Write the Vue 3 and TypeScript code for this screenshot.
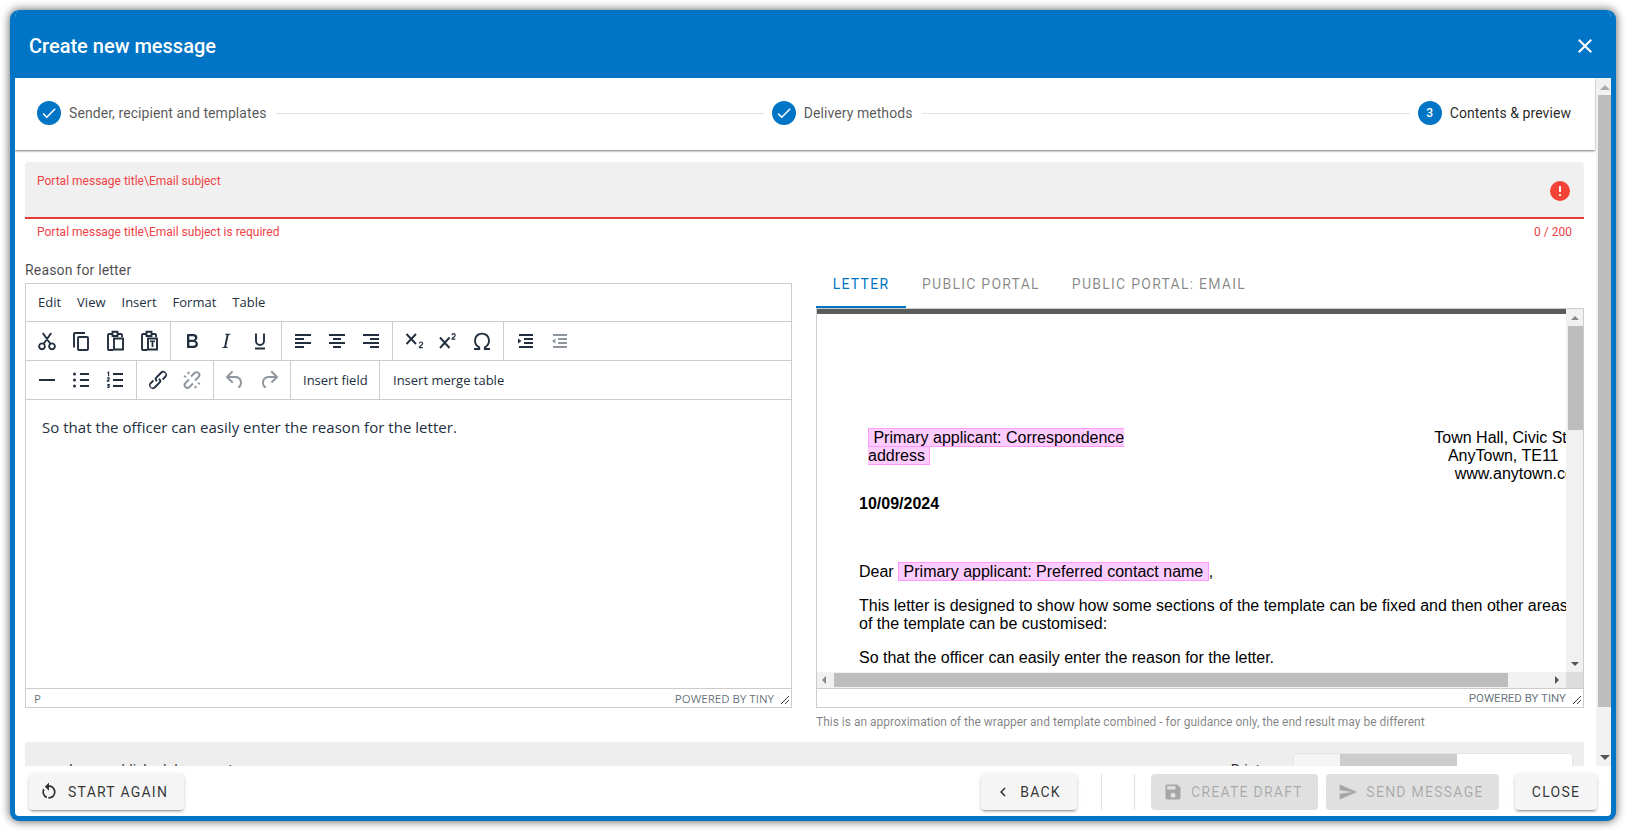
<script setup lang="ts">
interface Tool { name: string; d?: string; s?: string; t?: string; off?: boolean }

const P = {
  check: 'M21,7L9,19L3.5,13.5L4.91,12.09L9,16.17L19.59,5.59L21,7Z',
  close: 'M19,6.41L17.59,5L12,10.59L6.41,5L5,6.41L10.59,12L5,17.59L6.41,19L12,13.41L17.59,19L19,17.59L13.41,12L19,6.41Z',
  alert: 'M13,13H11V7H13M13,17H11V15H13M12,2A10,10 0 0,0 2,12A10,10 0 0,0 12,22A10,10 0 0,0 22,12A10,10 0 0,0 12,2Z',
  restart: 'M12,4C14.1,4 16.1,4.8 17.6,6.3C20.7,9.4 20.7,14.5 17.6,17.6C15.8,19.5 13.3,20.2 10.9,19.9L11.4,17.9C13.1,18.1 14.9,17.5 16.2,16.2C18.5,13.9 18.5,10.1 16.2,7.7C15.1,6.6 13.5,6 12,6V10.6L7,5.6L12,0.6V4M6.3,17.6C3.7,15 3.3,11 5.1,7.9L6.6,9.4C5.5,11.6 5.9,14.4 7.8,16.2C8.3,16.7 8.9,17.1 9.6,17.4L9,19.4C8,19 7.1,18.4 6.3,17.6Z',
  back: 'M15.41,16.58L10.83,12L15.41,7.41L14,6L8,12L14,18L15.41,16.58Z',
  save: 'M15,9H5V5H15M12,19A3,3 0 0,1 9,16A3,3 0 0,1 12,13A3,3 0 0,1 15,16A3,3 0 0,1 12,19M17,3H5C3.89,3 3,3.9 3,5V19A2,2 0 0,0 5,21H19A2,2 0 0,0 21,19V7L17,3Z',
  send: 'M2,21L23,12L2,3V10L17,12L2,14V21Z',
}

const clip = 'M9 5H6a1 1 0 0 0-1 1v14a1 1 0 0 0 1 1h4M15 5h3a1 1 0 0 1 1 1v2M9.5 2.8h5V7h-5z'
const pasteBox = 'M11 9.5h9v11h-9z'

const row1: Tool[][] = [
  [
    { name: 'cut', s: 'M8.7 14.8 16.2 4M15.3 14.8 7.8 4M7 14.4a2.9 2.9 0 1 0 .01 0zM17 14.4a2.9 2.9 0 1 0 .01 0z' },
    { name: 'copy', s: 'M16 4H6a1 1 0 0 0-1 1v13.5M10 8h8a1 1 0 0 1 1 1v11a1 1 0 0 1-1 1h-8a1 1 0 0 1-1-1V9a1 1 0 0 1 1-1z' },
    { name: 'paste', s: clip + pasteBox },
    { name: 'paste-text', s: clip + pasteBox, d: 'M13 11.5h5v1.6h-1.6v5h-1.8v-5H13z' },
  ],
  [
    { name: 'bold', d: 'M7.8 19c-.3 0-.5 0-.6-.2l-.2-.5V5.7c0-.2 0-.4.2-.5l.6-.2h5c1.5 0 2.7.3 3.5 1 .7.6 1.1 1.4 1.1 2.5a3 3 0 0 1-.6 1.9c-.4.6-1 1-1.6 1.2.4.1.9.3 1.3.6s.8.7 1 1.2c.3.4.4 1 .4 1.6 0 1.3-.4 2.3-1.3 3-.8.7-2 1-3.7 1H7.8zm5-8.3c.6 0 1.2-.1 1.6-.5.4-.3.6-.7.6-1.3 0-1.1-.8-1.7-2.3-1.7H9.3v3.5h3.4zm.5 6c.7 0 1.3-.1 1.7-.4.4-.4.6-.9.6-1.5s-.2-1-.7-1.4c-.4-.3-1-.4-2-.4H9.4v3.8h4z' },
    { name: 'italic', d: 'M16.7 4.7l-.1.9h-.3c-.6 0-1 0-1.4.3-.3.3-.4.6-.5 1.1l-2.1 9.8v.6c0 .5.4.8 1.4.8h.2l-.2.8H8l.2-.8h.2c1.1 0 1.8-.5 2-1.5l2-9.8.1-.5c0-.6-.4-.8-1.4-.8h-.3l.2-.9h5.8z' },
    { name: 'underline', s: 'M8 4.5v7.5a4 4 0 0 0 8 0V4.5M7 19.5h10' },
  ],
  [
    { name: 'left', d: 'M4 5h16v2H4zM4 9h9v2H4zM4 13h16v2H4zM4 17h9v2H4z' },
    { name: 'center', d: 'M4 5h16v2H4zM8 9h8v2H8zM4 13h16v2H4zM8 17h8v2H8z' },
    { name: 'right', d: 'M4 5h16v2H4zM11 9h9v2h-9zM4 13h16v2H4zM11 17h9v2h-9z' },
  ],
  [
    { name: 'sub', s: 'M4.500 5l9.500 10M14 5 4.500 15', t: 'M17.400 14.600a1.600 1.600 0 0 1 3.200 0c0 1.600-3.200 2.400-3.200 4h3.400' },
    { name: 'sup', s: 'M4 8.500l9.500 10.500M13.500 8.500 4 19', t: 'M16 6.200a1.600 1.600 0 0 1 3.200 0c0 1.600-3.200 2.400-3.200 4h3.400' },
    { name: 'omega', s: 'M4 20h5.200v-1.600C6.600 17 5 14.400 5 11.500 5 7.500 8 4.600 12 4.600s7 2.900 7 6.900c0 2.900-1.600 5.500-4.200 6.900V20H20' },
  ],
  [
    { name: 'indent', d: 'M6 5h14v2H6zM11 9h9v2h-9zM11 13h9v2h-9zM6 17h14v2H6zM5 9.500 8.500 12 5 14.500z' },
    { name: 'outdent', off: true, d: 'M6 5h14v2H6zM11 9h9v2h-9zM11 13h9v2h-9zM6 17h14v2H6zM8.500 9.500 5 12l3.500 2.500z' },
  ],
]

const row2: Tool[][] = [
  [
    { name: 'hr', d: 'M4 11h16v2H4z' },
    { name: 'bullets', d: 'M11 5h9v2h-9zM11 11h9v2h-9zM11 17h9v2h-9zM5.500 4.500a1.500 1.500 0 1 1 0 3 1.500 1.500 0 0 1 0-3zM5.500 10.500a1.500 1.500 0 1 1 0 3 1.500 1.500 0 0 1 0-3zM5.500 16.500a1.500 1.500 0 1 1 0 3 1.500 1.500 0 0 1 0-3z' },
    { name: 'numbers', d: 'M10 5h10v2H10zM10 11h10v2H10zM10 17h10v2H10z', t: 'M4.400 4.800l1.200-.6v4M4.300 10.600a1 1 0 0 1 2 0c0 1-2 1.300-2 2.500h2.100M4.300 16.500h1.800l-1 1.200c1 0 1.200 .5 1.200 .9 0 .9-1.400 1-2 .5' },
  ],
  [
    { name: 'link', d: 'M6.200 12.300a1 1 0 0 1 1.400 1.400l-2.100 2.100a2 2 0 1 0 2.700 2.700l4.800-4.800a1 1 0 0 0 0-1.400 1 1 0 1 1 1.400-1.300 2.900 2.900 0 0 1 0 4L9.600 20a3.900 3.900 0 0 1-5.500-5.500l2-2zm11.600-.6a1 1 0 0 1-1.400-1.400l2-2a2 2 0 1 0-2.600-2.800L11 10.300a1 1 0 0 0 0 1.400A1 1 0 1 1 9.600 13a2.900 2.900 0 0 1 0-4L14.400 4a3.900 3.900 0 0 1 5.500 5.500l-2 2z' },
    { name: 'unlink', off: true, s: 'M9 11.500 5.500 15a2.800 2.800 0 0 0 4 4l3.500-3.500M15 12.500 18.500 9a2.800 2.800 0 0 0-4-4L11 8.500M4 8l2.200 1M8 3.800 9 6M20 16l-2.200-1M16 20.200 15 18' },
  ],
  [
    { name: 'undo', off: true, d: 'M6.400 8H12c3.700 0 6.200 2 6.800 5.100.6 2.700-.4 5.600-2.300 6.800a1 1 0 0 1-1-1.800c1.100-.6 1.800-2.700 1.400-4.600-.5-2.100-2.100-3.500-4.900-3.500H6.400l3.300 3.300a1 1 0 1 1-1.400 1.400l-5-5a1 1 0 0 1 0-1.400l5-5a1 1 0 0 1 1.400 1.400L6.400 8z' },
    { name: 'redo', off: true, d: 'M17.600 10H12c-2.800 0-4.400 1.400-4.900 3.500-.4 2 .3 4 1.400 4.600a1 1 0 1 1-1 1.800c-2-1.200-2.900-4.100-2.300-6.800.6-3 3-5.100 6.800-5.100h5.600l-3.300-3.300a1 1 0 1 1 1.400-1.400l5 5a1 1 0 0 1 0 1.400l-5 5a1 1 0 0 1-1.400-1.400l3.300-3.300z' },
  ],
]

const menus = ['Edit', 'View', 'Insert', 'Format', 'Table']
const tabs = ['Letter', 'Public portal', 'Public portal: Email']
</script>

<template>
  <div class="dialog">
    <header class="head">
      <span class="title">Create new message</span>
      <svg class="head-close" viewBox="0 0 24 24"><path :d="P.close" /></svg>
    </header>

    <div class="body">
      <div class="scroller">
        <nav class="stepper">
          <div class="step first">
            <span class="dot"><svg viewBox="0 0 24 24"><path :d="P.check" /></svg></span>
            <span class="step-label">Sender, recipient and templates</span>
          </div>
          <i class="rule rule-a"></i>
          <div class="step">
            <span class="dot"><svg viewBox="0 0 24 24"><path :d="P.check" /></svg></span>
            <span class="step-label">Delivery methods</span>
          </div>
          <i class="rule"></i>
          <div class="step">
            <span class="dot">3</span>
            <span class="step-label current">Contents &amp; preview</span>
          </div>
        </nav>

        <main class="main">
          <div class="field">
            <span class="field-label">Portal message title\Email subject</span>
            <svg class="field-icon" viewBox="0 0 24 24"><path :d="P.alert" /></svg>
          </div>
          <div class="details">
            <span>Portal message title\Email subject is required</span>
            <span>0 / 200</span>
          </div>

          <div class="cols">
            <section class="col">
              <div class="reason">Reason for letter</div>
              <div class="editor">
                <div class="menubar">
                  <span v-for="m in menus" :key="m" class="menu">{{ m }}</span>
                </div>
                <div class="toolbar">
                  <div v-for="(group, g) in row1" :key="g" class="group">
                    <span v-for="tool in group" :key="tool.name" class="tool" :class="{ off: tool.off }">
                      <svg viewBox="0 0 24 24">
                        <path v-if="tool.s" class="stroke" :d="tool.s" />
                        <path v-if="tool.d" :d="tool.d" />
                        <path v-if="tool.t" class="thin" :d="tool.t" />
                      </svg>
                    </span>
                  </div>
                </div>
                <div class="toolbar">
                  <div v-for="(group, g) in row2" :key="g" class="group">
                    <span v-for="tool in group" :key="tool.name" class="tool" :class="{ off: tool.off }">
                      <svg viewBox="0 0 24 24">
                        <path v-if="tool.s" class="stroke" :d="tool.s" />
                        <path v-if="tool.d" :d="tool.d" />
                        <path v-if="tool.t" class="thin" :d="tool.t" />
                      </svg>
                    </span>
                  </div>
                  <div class="group text-group">Insert field</div>
                  <div class="group text-group last">Insert merge table</div>
                </div>
                <div class="edit-area">So that the officer can easily enter the reason for the letter.</div>
                <div class="status">
                  <span class="path">P</span>
                  <span class="brand">POWERED BY TINY</span>
                  <svg class="grip" viewBox="0 0 10 10"><path d="M1 9 9 1M5 9l4-4" /></svg>
                </div>
              </div>
            </section>

            <section class="col">
              <div class="tabs">
                <span v-for="(t, i) in tabs" :key="t" class="tab" :class="{ active: i === 0 }">{{ t }}</span>
              </div>
              <div class="preview">
                <div class="pv-top">
                  <div class="pv-main">
                    <div class="darkbar"></div>
                    <div class="letter">
                      <div class="address">
                        <div class="addr-left"><span class="merge">&nbsp;Primary applicant: Correspondence address&nbsp;</span></div>
                        <div class="addr-right">Town Hall, Civic Street,&nbsp;&nbsp;<br />AnyTown, TE11&nbsp;&nbsp;&nbsp;&nbsp;&nbsp;&nbsp;&nbsp;&nbsp;<br />www.anytown.com</div>
                      </div>
                      <div class="date">10/09/2024</div>
                      <div class="dear">Dear <span class="merge">&nbsp;Primary applicant: Preferred contact name&nbsp;</span>,</div>
                      <div class="para">This letter is designed to show how some sections of the template can be fixed and then other areas<br />of the template can be customised:</div>
                      <div class="para">So that the officer can easily enter the reason for the letter.</div>
                    </div>
                    <div class="hbar">
                      <i class="arrow a-left"></i>
                      <span class="hthumb"></span>
                      <i class="arrow a-right"></i>
                    </div>
                  </div>
                  <div class="vbar">
                    <i class="arrow a-up"></i>
                    <span class="vthumb"></span>
                    <i class="arrow a-down"></i>
                    <span class="corner"></span>
                  </div>
                </div>
                <div class="status pv-status">
                  <span class="brand">POWERED BY TINY</span>
                  <svg class="grip" viewBox="0 0 10 10"><path d="M1 9 9 1M5 9l4-4" /></svg>
                </div>
              </div>
              <div class="note">This is an approximation of the wrapper and template combined - for guidance only, the end result may be different</div>
            </section>
          </div>

          <div class="panel">
            <span class="panel-text">Issue published document</span>
            <span class="panel-side">Print</span>
            <div class="toggle"><i class="seg s1"></i><i class="seg s2"></i><i class="seg s3"></i></div>
          </div>
        </main>
      </div>

      <div class="page-bar">
        <i class="arrow a-up big"></i>
        <span class="page-thumb"></span>
        <i class="arrow a-down big"></i>
      </div>
    </div>

    <footer class="foot">
      <button class="btn start"><svg viewBox="0 0 24 24"><path :d="P.restart" /></svg>START AGAIN</button>
      <button class="btn backbtn"><svg viewBox="0 0 24 24"><path :d="P.back" /></svg>BACK</button>
      <i class="vdiv d1"></i>
      <i class="vdiv d2"></i>
      <button class="btn dis draft"><svg viewBox="0 0 24 24"><path :d="P.save" /></svg>CREATE DRAFT</button>
      <button class="btn dis sendbtn"><svg viewBox="0 0 24 24"><path :d="P.send" /></svg>SEND MESSAGE</button>
      <button class="btn closebtn">CLOSE</button>
    </footer>
  </div>
</template>

<style>
html, body { margin: 0; background: #fff; overflow: hidden; }
</style>

<style scoped>
* { box-sizing: border-box; }
.dialog {
  margin: 10px;
  height: 811px;
  display: flex;
  flex-direction: column;
  border: solid #0175c5;
  border-width: 0 5px 5px;
  border-radius: 9px;
  background: #fff;
  box-shadow: 0 0 9px 1px rgba(0, 0, 0, 0.55);
  font-family: Roboto, sans-serif;
  overflow: hidden;
}
.head {
  flex: none;
  height: 68px;
  margin: 0 -5px;
  padding: 4px 19px 0 19px;
  background: #0175c5;
  display: flex;
  align-items: center;
  justify-content: space-between;
  color: #fff;
}
.title { font-size: 20px; font-weight: 500; }
.head-close { width: 24px; height: 24px; fill: #fff; }

.body { flex: none; height: 688px; display: flex; }
.scroller { flex: 1; min-width: 0; overflow: hidden; }

.stepper {
  height: 72px;
  width: 1580px;
  display: flex;
  align-items: center;
  box-shadow: 0 1px 2px rgba(0, 0, 0, 0.55);
  position: relative;
  padding: 0 24px 2px 22px;
}
.step { display: flex; align-items: center; flex: none; }
.dot {
  width: 24px;
  height: 24px;
  border-radius: 50%;
  background: #0175c5;
  color: #fff;
  font-size: 12px;
  font-weight: 500;
  display: flex;
  align-items: center;
  justify-content: center;
  margin-right: 8px;
}
.dot svg { width: 18px; height: 18px; fill: #fff; }
.step-label { font-size: 14px; letter-spacing: 0.07px; color: rgba(0, 0, 0, 0.68); white-space: nowrap; }
.step-label.current { color: rgba(0, 0, 0, 0.87); }
.rule { flex: 1; height: 1px; background: #e0e0e0; margin: 0 8px 0 10px; }

.main { padding: 12px 12px 0 10px; }
.field {
  height: 57px;
  background: #f0f0f0;
  border-bottom: 2px solid #e53935;
  border-radius: 4px 4px 0 0;
  padding: 0 12px;
  display: flex;
  justify-content: space-between;
}
.field-label { font-size: 12px; line-height: 14px; margin-top: 12px; color: #ef4245; }
.field-icon { width: 24px; height: 24px; margin-top: 17px; fill: #f44336; }
.details {
  height: 41px;
  padding: 6px 12px 0;
  display: flex;
  justify-content: space-between;
  font-size: 12px;
  line-height: 14px;
  color: #ef4245;
}

.cols { display: grid; grid-template-columns: 767px 768px; column-gap: 24px; }
.reason { height: 23px; font-size: 14px; letter-spacing: 0.18px; line-height: 20px; color: rgba(0, 0, 0, 0.72); }

.editor {
  height: 425px;
  border: 1px solid #ccc;
  display: flex;
  flex-direction: column;
  font-family: "Open Sans", sans-serif;
  color: #222f3e;
}
.menubar {
  flex: none;
  height: 37px;
  display: flex;
  align-items: center;
  padding: 0 0 2px 12px;
  font-size: 13px;
}
.menu { margin-right: 16px; }
.toolbar { flex: none; height: 39px; display: flex; border-top: 1px solid #ccc; }
.group { display: flex; align-items: center; padding: 0 4px; border-right: 1px solid #ccc; }
.group:last-child { border-right: 0; }
.tool { width: 34px; height: 34px; display: flex; align-items: center; justify-content: center; }
.tool svg { width: 24px; height: 24px; fill: #222f3e; }
.stroke { fill: none; stroke: #222f3e; stroke-width: 1.9; }
.thin { fill: none; stroke: #222f3e; stroke-width: 1.2; }
.tool.off svg { opacity: 0.5; }
.text-group { padding: 0 12px 1px; font-size: 13px; width: 89px; white-space: nowrap; }
.text-group.last { width: auto; padding-left: 13px; }
.edit-area {
  flex: 1;
  border-top: 1px solid #ccc;
  padding: 16px;
  font-size: 15px;
  letter-spacing: 0.03px;
  line-height: 22px;
  color: #222f3e;
}
.status {
  flex: none;
  height: 19px;
  border-top: 1px solid #ccc;
  display: flex;
  align-items: center;
  padding: 0 1px 0 8px;
  font-size: 11.5px;
  color: rgba(34, 47, 62, 0.7);
}
.path { margin-right: auto; }
.brand { margin-left: auto; font-size: 11.5px; }
.grip { width: 10px; height: 10px; margin: 4px 0 0 6px; stroke: #444; stroke-width: 1; fill: none; }

.tabs { height: 48px; display: flex; }
.tab {
  min-width: 90px;
  padding: 0 16px;
  display: flex;
  align-items: center;
  justify-content: center;
  font-size: 14px;
  letter-spacing: 0.0892857em;
  text-transform: uppercase;
  color: rgba(0, 0, 0, 0.48);
  white-space: nowrap;
}
.tab.active { color: #0175c5; box-shadow: inset 0 -2px 0 #0175c5; }

.preview {
  height: 400px;
  border: 1px solid #ccc;
  display: flex;
  flex-direction: column;
}
.pv-top { flex: 1; min-height: 0; display: flex; }
.pv-main { flex: 1; min-width: 0; display: flex; flex-direction: column; }
.darkbar { flex: none; height: 5px; background: #595c5f; }
.letter {
  flex: 1;
  min-height: 0;
  overflow: hidden;
  padding: 115px 0 0 42px;
  font-family: "Liberation Sans", sans-serif;
  font-size: 16px;
  line-height: 18px;
  color: #000;
}
.address { display: flex; width: 1000px; }
.addr-left { flex: none; width: 262px; margin-left: 9px; }
.addr-right { flex: none; width: 241px; margin-left: 270.5px; text-align: center; white-space: nowrap; }
.merge { background: #ffccff; border: 1px solid #ff99ff; }
.date { margin-top: 12px; font-weight: 700; }
.dear { margin-top: 50px; white-space: nowrap; }
.para { margin-top: 16px; white-space: nowrap; }

.hbar { flex: none; height: 16px; background: #f1f1f1; display: flex; align-items: center; }
.hthumb { width: 674px; height: 14px; background: #bdbdbd; }
.vbar { flex: none; width: 17px; background: #f1f1f1; display: flex; flex-direction: column; align-items: center; }
.vthumb { width: 15px; height: 104px; background: #bdbdbd; margin-left: 2px; }
.corner { width: 17px; height: 16px; background: #dcdcdc; margin-top: 3px; flex: none; }

.arrow { flex: none; display: block; width: 0; height: 0; border: 4px solid transparent; }
.a-left { border-left-width: 0; border-right: 4px solid #888; margin: 0 8px 0 5px; }
.a-right { border-right-width: 0; border-left: 4px solid #555; margin-left: auto; margin-right: 7px; }
.a-up { border-top-width: 0; border-bottom: 4px solid #888; margin: 7px 0 6px; }
.a-down { border-bottom-width: 0; border-top: 4px solid #555; margin-top: auto; margin-bottom: 3px; }

.pv-status { padding-right: 1px; }
.note { font-size: 12px; line-height: 16px; margin-top: 6px; color: rgba(0, 0, 0, 0.5); }

.panel {
  margin-top: 12px;
  height: 60px;
  background: #eee;
  display: flex;
  padding: 12px 12px 0 44px;
  font-size: 14px;
  line-height: 20px;
  color: rgba(0, 0, 0, 0.8);
}
.panel-text { margin-top: 6px; }
.panel-side { margin: 6px 34px 0 auto; }
.toggle { width: 278px; height: 40px; display: flex; border-radius: 4px; overflow: hidden; background: #fff; box-shadow: 0 0 0 1px #e4e4e4; }
.s1 { width: 46px; background: #f5f5f5; }
.s2 { width: 117px; background: #ccc; }
.s3 { flex: 1; background: #fff; }

.page-bar { flex: none; width: 15px; background: #f1f1f1; display: flex; flex-direction: column; align-items: center; }
.page-thumb { width: 13px; height: 612px; margin-left: 2px; background: #bdbdbd; }
.a-up.big { border-width: 0 5px 5px; border-color: transparent transparent #aaa; margin: 7px 0 5px 2px; }
.a-down.big { border-width: 5px 5px 0; border-color: #555 transparent transparent; margin: auto 0 6px 2px; }

.foot { flex: 1; display: flex; padding: 8px 14px 6px; }
.btn {
  height: 36px;
  border: 0;
  border-radius: 4px;
  background: #f5f5f5;
  color: rgba(0, 0, 0, 0.8);
  font-family: Roboto, sans-serif;
  font-size: 14px;
  letter-spacing: 1.25px;
  box-shadow: 0 3px 1px -2px rgba(0, 0, 0, 0.2), 0 2px 2px 0 rgba(0, 0, 0, 0.14), 0 1px 5px 0 rgba(0, 0, 0, 0.12);
  display: flex;
  align-items: center;
  justify-content: center;
  padding: 0;
}
.btn svg { width: 18px; height: 18px; fill: rgba(0, 0, 0, 0.8); margin-right: 10px; }
.btn.dis { background: #e0e0e0; color: rgba(0, 0, 0, 0.26); box-shadow: none; padding-right: 3px; }
.btn.dis svg { fill: rgba(0, 0, 0, 0.26); width: 20px; height: 20px; margin-right: 8px; }
.start { width: 155px; justify-content: flex-start; padding-left: 10px; }
.start svg { width: 20px; height: 20px; margin-right: 9px; }
.backbtn { width: 96px; margin-left: auto; padding-right: 3px; }
.backbtn svg { margin-right: 8px; }
.vdiv { flex: none; width: 1px; background: #e0e0e0; }
.d1 { margin-left: 24px; }
.d2 { margin-left: 32px; }
.draft { width: 167px; margin-left: 16px; }
.sendbtn { width: 173px; margin-left: 8px; }
.closebtn { width: 82px; margin-left: 16px; }
</style>
